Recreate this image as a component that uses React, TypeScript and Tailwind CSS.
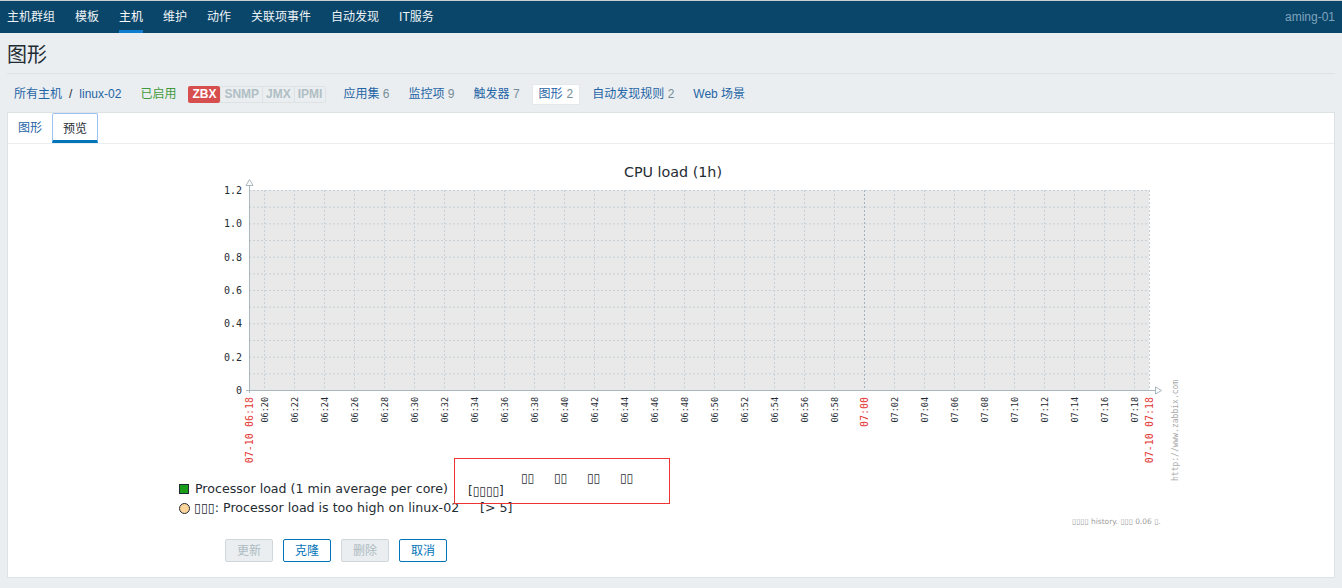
import React from "react";

const NAV = ["主机群组", "模板", "主机", "维护", "动作", "关联项事件", "自动发现", "IT服务"];

const TICKS = Array.from({ length: 30 }, (_, i) => {
  const m = 20 + i * 2;
  const h = m >= 60 ? 7 : 6;
  return { x: 264 + i * 30, label: `0${h}:${String(m % 60).padStart(2, "0")}`, red: m === 60 };
});

const Y_LABELS = ["1.2", "1.0", "0.8", "0.6", "0.4", "0.2", "0"];

function Chart() {
  const top = 190;
  const bottom = 390;
  const left = 249;
  const right = 1149;
  const hLines = Array.from({ length: 12 }, (_, k) => top + (k * (bottom - top)) / 12);
  return (
    <svg width={1020} height={380} viewBox="170 150 1020 380" className="block">
      <text x={673} y={177} textAnchor="middle" fontFamily="DejaVu Sans" fontSize={14.3} fill="#1f2c33">
        CPU load (1h)
      </text>
      <rect x={left} y={top} width={right - left} height={bottom - top} fill="#e9e9e9" />
      {hLines.map((y, k) => (
        <line key={k} x1={left} x2={right} y1={y + 0.5} y2={y + 0.5} stroke="#c6d0d6" strokeDasharray="2 2" />
      ))}
      {TICKS.map((t) => (
        <line
          key={t.x}
          x1={t.x + 0.5}
          x2={t.x + 0.5}
          y1={top}
          y2={bottom}
          stroke={t.red ? "#a3b4c0" : "#c6d0d6"}
          strokeDasharray="2 2"
        />
      ))}
      <line x1={right + 0.5} x2={right + 0.5} y1={top} y2={bottom} stroke="#c6d0d6" strokeDasharray="2 2" />
      {/* axes */}
      <line x1={left + 0.5} x2={left + 0.5} y1={185} y2={393} stroke="#a9b7c0" />
      <line x1={246} x2={1156} y1={bottom + 0.5} y2={bottom + 0.5} stroke="#a9b7c0" />
      <polygon points="249.5,179.5 246,185.5 253,185.5" fill="#fff" stroke="#a9b7c0" />
      <polygon points="1161.5,390.5 1155.5,387 1155.5,394" fill="#fff" stroke="#a9b7c0" />
      {Y_LABELS.map((l, k) => (
        <text
          key={l}
          x={242}
          y={top + (k * (bottom - top)) / 6 + 4}
          textAnchor="end"
          fontFamily="DejaVu Sans Mono"
          fontSize={10}
          fill="#1f2c33"
        >
          {l}
        </text>
      ))}
      {TICKS.map((t) => (
        <text
          key={t.label}
          transform={`translate(${t.x + 3.5},397) rotate(-90)`}
          textAnchor="end"
          fontFamily="DejaVu Sans Mono"
          fontSize={t.red ? 10 : 8.5}
          fill={t.red ? "#e33734" : "#1f2c33"}
        >
          {t.label}
        </text>
      ))}
      <text transform="translate(253,397) rotate(-90)" textAnchor="end" fontFamily="DejaVu Sans Mono" fontSize={10} fill="#e33734">
        07-10 06:18
      </text>
      <text transform="translate(1153,397) rotate(-90)" textAnchor="end" fontFamily="DejaVu Sans Mono" fontSize={10} fill="#e33734">
        07-10 07:18
      </text>
      <text transform="translate(1178,481) rotate(-90)" fontFamily="DejaVu Sans Mono" fontSize={8} fill="#a8a8a8">
        http://www.zabbix.com
      </text>
      {/* legend */}
      <rect x={179.5} y={484.5} width={9} height={9} fill="#1a9c1a" stroke="#1f2c33" />
      <text x={195} y={493} fontFamily="DejaVu Sans" fontSize={12.6} fill="#1f2c33">
        Processor load (1 min average per core)
      </text>
      <text x={468} y={495} fontFamily="DejaVu Sans" fontSize={12} fill="#1f2c33">
        [▯▯▯▯]
      </text>
      <circle cx={184.5} cy={508.5} r={5} fill="#fdd59a" stroke="#1f2c33" />
      <text x={194} y={512} fontFamily="DejaVu Sans" fontSize={12.6} fill="#1f2c33">
        ▯▯▯: Processor load is too high on linux-02
      </text>
      <text x={480} y={512} fontFamily="DejaVu Sans" fontSize={12.6} fill="#1f2c33">
        [&gt; 5]
      </text>
      <rect x={454.5} y={458.5} width={215} height={45} fill="none" stroke="#ee3333" />
      {[521, 554, 587, 620].map((x) => (
        <text key={x} x={x} y={482} fontFamily="DejaVu Sans" fontSize={12} fill="#1f2c33">
          ▯▯
        </text>
      ))}
      <text x={1072} y={524} fontFamily="DejaVu Sans" fontSize={7.5} fill="#a0a0a0">
        ▯▯▯▯ history. ▯▯▯ 0.06 ▯.
      </text>
    </svg>
  );
}

export default function App() {
  return (
    <div className="min-h-[588px] bg-[#ebeef0] font-['Liberation_Sans','Noto_Sans_CJK_SC',sans-serif] text-[12px] text-[#1f2c33]">
      <header className="flex h-[33px] items-stretch justify-between border-t border-[#c9cfd3] bg-[#0a466a]">
        <nav className="flex gap-5 pl-[7px]">
          {NAV.map((n) => (
            <a
              key={n}
              className={
                n === "主机"
                  ? "flex items-center border-b-[3px] border-[#0f7ed0] pt-[3px] text-white"
                  : "flex items-center text-[#eef3f6]"
              }
            >
              {n}
            </a>
          ))}
        </nav>
        <div className="flex items-center pr-[7px] text-[#7fa3bd]">aming-01</div>
      </header>

      <div className="px-[7px]">
        <h1 className="flex h-[41px] items-center border-b border-[#dde2e5] pt-[3px] text-[20px] font-normal text-[#1f2c33]">
          图形
        </h1>
      </div>

      <div className="flex h-[38px] items-center gap-[5px] pl-[7px] pt-[2px]">
        <div className="flex items-center px-[7px] text-[#1f65a6]">
          所有主机<span className="mx-[7px] text-[#1f2c33]">/</span>linux-02
        </div>
        <div className="px-[7px] text-[#3f9a3c]">已启用</div>
        <div className="mr-[5px] flex h-[17px] items-stretch font-bold">
          <span className="flex items-center rounded-[2px] bg-[#d64e4e] px-1 text-white">ZBX</span>
          <span className="flex items-center border border-[#dde2e5] bg-[#ebeef0] px-[3px] text-[#b0bec5]">SNMP</span>
          <span className="flex items-center border border-l-0 border-[#dde2e5] bg-[#ebeef0] px-[3px] text-[#b0bec5]">JMX</span>
          <span className="flex items-center rounded-r-[2px] border border-l-0 border-[#dde2e5] bg-[#ebeef0] px-[3px] text-[#b0bec5]">IPMI</span>
        </div>
        {[
          ["应用集", "6"],
          ["监控项", "9"],
          ["触发器", "7"],
        ].map(([a, b]) => (
          <div key={a} className="px-[7px] text-[#1f65a6]">
            {a} <span className="text-[#768d99]">{b}</span>
          </div>
        ))}
        <div className="flex h-[21px] items-center border border-[#e4e8ea] bg-white px-[6px] text-[#1f65a6]">
          图形 <span className="ml-1 text-[#768d99]">2</span>
        </div>
        <div className="px-[7px] text-[#1f65a6]">
          自动发现规则 <span className="text-[#768d99]">2</span>
        </div>
        <div className="px-[7px] text-[#1f65a6]">Web 场景</div>
      </div>

      <main className="mx-[7px] border border-[#dde2e5] bg-white pb-[15px]">
        <div className="flex h-[31px] border-b border-[#ebeef0]">
          <a className="flex items-center px-[10px] text-[#1f65a6]">图形</a>
          <a className="flex items-center rounded-t-[2px] border border-b-[3px] border-[#9cc2f5] border-b-[#0275b8] px-[10px] pt-[3px] text-[#1f2c33]">
            预览
          </a>
        </div>
        <div className="ml-[162px] mt-[6px]">
          <Chart />
        </div>
        <div className="mt-[9px] flex gap-[10px] pl-[217px]">
          <button className="h-[23px] w-[48px] rounded-[2px] border border-[#cfd7db] bg-[#ebeef0] text-[#acbbc2]">更新</button>
          <button className="h-[23px] w-[48px] rounded-[2px] border border-[#0275b8] bg-white text-[#0275b8]">克隆</button>
          <button className="h-[23px] w-[48px] rounded-[2px] border border-[#cfd7db] bg-[#ebeef0] text-[#acbbc2]">删除</button>
          <button className="h-[23px] w-[48px] rounded-[2px] border border-[#0275b8] bg-white text-[#0275b8]">取消</button>
        </div>
      </main>
    </div>
  );
}
